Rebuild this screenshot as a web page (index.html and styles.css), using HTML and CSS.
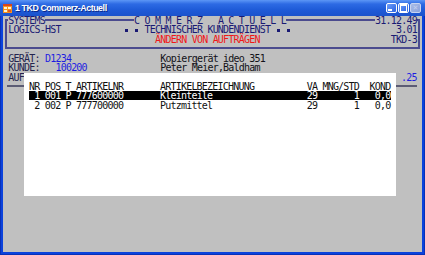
FILE: index.html
```
<!DOCTYPE html>
<html>
<head lang="de">
    <meta charset="UTF-8">
    <title>1 TKD Commerz-Actuell</title>
    <link rel="stylesheet" href="styles.css">
</head>
<body>
    <div class="window">
        <div class="titlebar">
            <svg class="appicon" width="9" height="9" viewBox="0 0 9 9">
                <rect x="0" y="0" width="9" height="9" fill="#f7931e"/>
                <rect x="0" y="0" width="9" height="2" fill="#d8461a"/>
                <rect x="1" y="3" width="3" height="2" fill="#fff2d0"/>
                <rect x="5" y="3" width="3" height="2" fill="#fff2d0"/>
                <rect x="1" y="6" width="3" height="2" fill="#fff2d0"/>
                <rect x="5" y="6" width="3" height="2" fill="#e05a20"/>
            </svg>
            <span class="title">1 TKD Commerz-Actuell</span>
            <div class="controls">
                <span class="btn min"></span>
                <span class="btn max"></span>
                <span class="btn close">&#x2715;</span>
            </div>
        </div>
        <div class="screen">
            <div class="head">
                <div class="line"> <span class="cut">SYSTEMS</span>                 <span class="cut">C O M M E R Z   A C T U E L L</span>                 <span class="cut">31.12.49</span></div>
                <div class="line"> LOGICS-HST            <i class="sq"></i> <i class="sq"></i> TECHNISCHER KUNDENDIENST <i class="sq"></i> <i class="sq"></i>                    3.01</div>
                <div class="line">                             <span class="red">ÄNDERN VON AUFTRÄGEN</span>                         TKD-3</div>
                <div class="line"></div>
            </div>
            <div class="line label"> GERÄT: <span class="blue">D1234</span>                 <span class="value">Kopiergerät ideo 351</span></div>
            <div class="line label"> KUNDE:   <span class="blue">100200</span>              <span class="value">Peter Meier,Baldham</span></div>
            <div class="line label split"><span> AUF</span><span class="blue">.25 </span></div>
            <div class="sep"></div>

            <div class="popup">
                <div class="line"> NR POS T ARTIKELNR       ARTIKELBEZEICHNUNG          VA MNG/STD  KOND</div>
                <div class="line"> <span class="sel"> 1 001 P 777600000       Kleinteile                  29       1   0,0</span></div>
                <div class="line">  2 002 P 777700000       Putzmittel                  29       1   0,0</div>
            </div>
        </div>
    </div>
</body>
</html>
```

FILE: styles.css
```
*{
    margin: 0;
    padding: 0;
    box-sizing: border-box;
}
html, body{
    width: 425px;
    height: 255px;
    overflow: hidden;
}

.window{
    width: 425px;
    height: 255px;
    display: flex;
    flex-direction: column;
    background: #0b42dc;
    box-shadow: inset 1px 0 #0831b8, inset -1px 0 #0831b8, inset 0 -1px #0831b8;
}

/* title bar */
.titlebar{
    height: 16px;
    display: flex;
    align-items: center;
    padding: 0 4px 0 3px;
    background: linear-gradient(#5c96f6 0, #2d6ae4 25%, #1f5bd8 60%, #1b52cc 100%);
}
.appicon{
    display: block;
    margin-right: 3px;
}
.title{
    font-family: "Liberation Sans", Arial, sans-serif;
    font-weight: bold;
    font-size: 8.9px;
    letter-spacing: -0.45px;
    color: #fff;
    text-shadow: 1px 1px 0 #0b2a8a;
}
.controls{
    margin-left: auto;
    display: flex;
    gap: 1px;
}
.btn{
    width: 11px;
    height: 10px;
    border: 1px solid #fff;
    border-radius: 2px;
    background: linear-gradient(135deg, #6f9ef8, #2b63e2);
    display: flex;
    align-items: center;
    justify-content: center;
}
.btn.min::after{
    content: "";
    width: 4px;
    height: 2px;
    background: #fff;
    margin: 4px 3px 0 0;
}
.btn.max::after{
    content: "";
    width: 5px;
    height: 5px;
    border: 1px solid #fff;
    border-top-width: 2px;
}
.btn.close{
    border-color: #c8d4f0;
    background: linear-gradient(135deg, #a9bbe6, #8aa2dc);
    color: #c4d0ee;
    font-family: "DejaVu Sans", sans-serif;
    font-size: 7px;
    line-height: 1;
}

/* terminal screen */
.screen{
    flex: 1;
    margin: 0 3px 3px 3px;
    background: #c0c0c0;
    position: relative;
    font-family: "DejaVu Sans Mono", "Liberation Mono", monospace;
    font-size: 10px;
    letter-spacing: -0.78px;
    line-height: 9.44px;
    color: #1a1a74;
}
.line{
    height: 9.44px;
    white-space: pre;
}

/* box around the program header, drawn like the terminal frame chars */
.head{
    --fc: #4b4b8e;
    background:
        linear-gradient(var(--fc), var(--fc)) 2px 3px / 2px 30px no-repeat,
        linear-gradient(var(--fc), var(--fc)) 415px 3px / 2px 30px no-repeat,
        linear-gradient(var(--fc), var(--fc)) 2px 3px / 415px 2px no-repeat,
        linear-gradient(var(--fc), var(--fc)) 2px 31px / 415px 2px no-repeat;
}
.cut{
    display: inline-block;
    vertical-align: top;
    height: 9.44px;
    background: #c0c0c0;
}
.sq{
    display: inline-block;
    vertical-align: top;
    width: 5.24px;
    height: 9.44px;
    background: linear-gradient(#1a1a74, #1a1a74) no-repeat 1px 4px / 3px 3px;
}
.red{
    color: #f01818;
}
.blue{
    color: #1e1ee0;
}
.label{
    color: #24244e;
}
.value{
    color: #121218;
}
.split{
    display: flex;
    justify-content: space-between;
}
.sep{
    height: 9.44px;
    margin: 0 5px 0 4px;
    background: linear-gradient(transparent 3.5px, #5c5c74 3.5px, #5c5c74 5.5px, transparent 5.5px);
}

/* popup list */
.popup{
    position: absolute;
    left: 20.7px;
    top: 56.6px;
    width: 372px;
    height: 123px;
    padding-top: 9.44px;
    background: #fff;
    color: #101010;
}
.sel{
    display: inline-block;
    vertical-align: top;
    height: 9px;
    background: #000;
    color: #fff;
}
```
